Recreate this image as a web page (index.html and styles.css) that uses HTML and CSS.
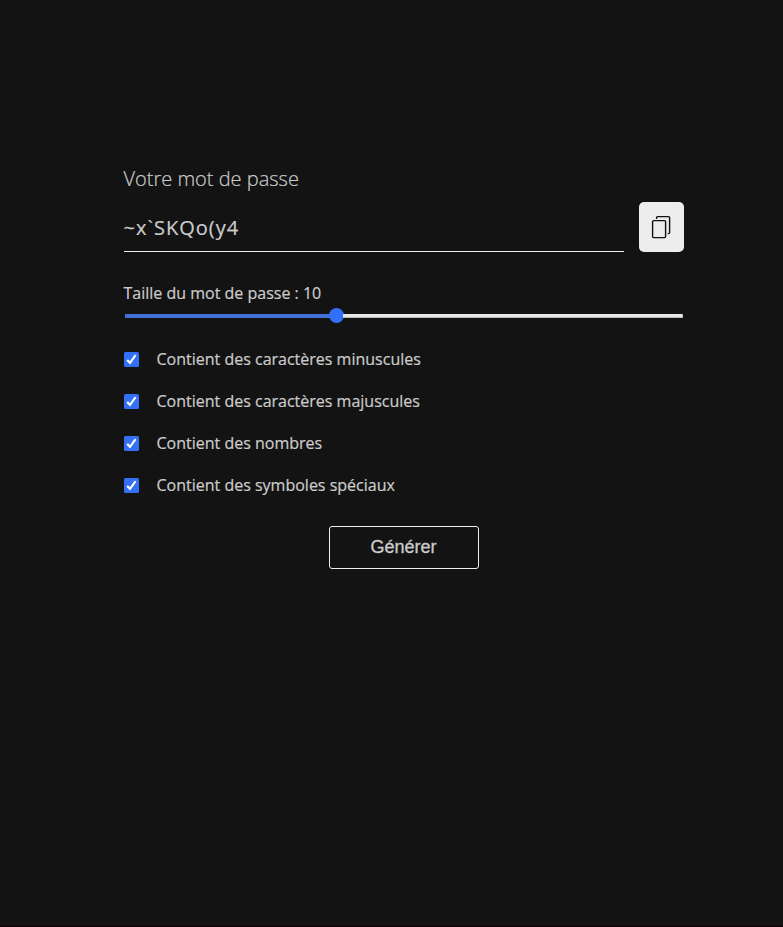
FILE: index.html
```html
<!DOCTYPE html>
<html lang="fr">
<head>
<meta charset="utf-8">
<title>Générateur de mot de passe</title>
<link rel="stylesheet" href="styles.css">
</head>
<body>
<main class="generator">
  <h1 class="title">Votre mot de passe</h1>
  <div class="result">
    <div class="password">~x`SKQo(y4</div>
    <button class="copy" type="button" aria-label="Copier">
      <svg width="22" height="26" viewBox="0 0 22 26" fill="none" stroke="#111" stroke-width="1.4" stroke-linejoin="round" stroke-linecap="round">
        <rect x="2.6" y="6.6" width="13" height="17" rx="1"/>
        <path d="M6.6 4.4V3.6a1 1 0 0 1 1-1h11a1 1 0 0 1 1 1v15a1 1 0 0 1-1 1h-.4"/>
      </svg>
    </button>
  </div>
  <div class="length">Taille du mot de passe : 10</div>
  <div class="slider"><span class="fill"></span><span class="thumb"></span><span class="rest"></span></div>
  <ul class="options">
    <li class="option"><span class="check"><svg viewBox="0 0 15 15"><path d="M3.2 7.9l2.8 2.9 5.6-7.6"/></svg></span>Contient des caractères minuscules</li>
    <li class="option"><span class="check"><svg viewBox="0 0 15 15"><path d="M3.2 7.9l2.8 2.9 5.6-7.6"/></svg></span>Contient des caractères majuscules</li>
    <li class="option"><span class="check"><svg viewBox="0 0 15 15"><path d="M3.2 7.9l2.8 2.9 5.6-7.6"/></svg></span>Contient des nombres</li>
    <li class="option"><span class="check"><svg viewBox="0 0 15 15"><path d="M3.2 7.9l2.8 2.9 5.6-7.6"/></svg></span>Contient des symboles spéciaux</li>
  </ul>
  <button class="generate" type="button">Générer</button>
</main>
</body>
</html>
```
FILE: styles.css
```css
* { box-sizing: border-box; }
body {
  margin: 0;
  min-height: 927px;
  background: #131313;
  color: #ccc;
  font: 400 16px/22px "Open Sans", sans-serif;
  -webkit-text-stroke: 0.2px #ccc;
  border-bottom: 1px solid #080006;
}
.generator {
  width: 560.5px;
  margin-left: 123.5px;
  padding-top: 165px;
}
.title {
  margin: 0;
  font-size: 20px;
  font-weight: 300;
  line-height: 28px;
}
.result {
  display: flex;
  justify-content: space-between;
  margin-top: 9px;
}
.password {
  width: 500.5px;
  height: 50px;
  border-bottom: 1px solid #eee;
  font-size: 20px;
  line-height: 51px;
  letter-spacing: 1px;
}
.copy {
  display: flex;
  align-items: center;
  justify-content: center;
  width: 45px;
  height: 50px;
  padding: 0 2px 0 0;
  border: 0;
  border-radius: 5px;
  background: #ededed;
}
.length { margin-top: 30px; }
.slider {
  display: flex;
  align-items: center;
  height: 16px;
  margin: 4px 1px 0 1.5px;
}
.fill { width: 204.5px; height: 4px; background: #4270d5; }
.thumb { width: 15px; height: 15px; margin: -1px -1px 0; border-radius: 50%; background: #326ffa; }
.rest { flex: 1; height: 4px; background: #e8e8e8; border: 1px solid #bbb; border-width: 0 1px 1px 0; }
.options { list-style: none; margin: 24px 0 0; padding: 0; }
.option {
  display: flex;
  align-items: center;
  height: 22px;
  margin-bottom: 20px;
}
.check {
  width: 15px;
  height: 15px;
  margin: 1px 17.5px 0 0.5px;
  border-radius: 1.5px;
  background: #3470f5;
}
.check svg { display: block; width: 15px; height: 15px; fill: none; stroke: #fff; stroke-width: 2.1; }
.generate {
  display: block;
  width: 150px;
  height: 43px;
  margin: 30px 0 0 205.5px;
  padding: 0 1px 0 0;
  border: 1px solid #eee;
  border-radius: 3px;
  background: transparent;
  color: #ccc;
  font: 18px "Liberation Sans", sans-serif;
  -webkit-text-stroke: 0.3px #ccc;
}
```
